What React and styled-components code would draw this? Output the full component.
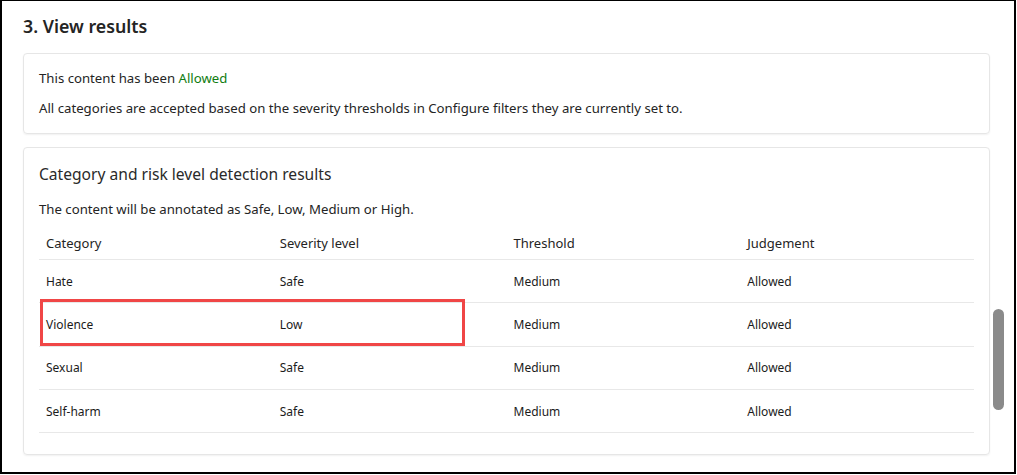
import styled, { createGlobalStyle } from "styled-components";

const GlobalStyle = createGlobalStyle`
  html, body {
    margin: 0;
    padding: 0;
    background: #ffffff;
  }
  body {
    font-family: "Noto Sans", "Open Sans", sans-serif;
    color: #242424;
  }
`;

const Frame = styled.div`
  position: relative;
  box-sizing: border-box;
  width: 1016px;
  height: 474px;
  border: 2px solid #000;
  border-top-width: 1px;
  overflow: hidden;
  padding: 0 24px 0 21px;
`;

const Heading = styled.h2`
  margin: 0;
  padding-top: 12px;
  height: 52px;
  box-sizing: border-box;
  font-size: 17.8px;
  font-weight: 600;
  line-height: 26px;
  color: #242424;
`;

const Card = styled.section`
  box-sizing: border-box;
  border: 1px solid #e6e6e6;
  border-radius: 4px;
  box-shadow: 0 1px 2px rgba(0, 0, 0, 0.06);
  padding: ${({ $padding }) => $padding};
  margin-bottom: 13px;
`;

const Line = styled.p`
  margin: 0;
  font-size: 13.2px;
  line-height: 20px;
  color: #242424;
  & + & {
    margin-top: 10px;
  }
`;

const Allowed = styled.span`
  color: #107c10;
`;

const CardTitle = styled.h3`
  margin: 0;
  font-size: 15.6px;
  font-weight: 400;
  line-height: 22px;
  color: #2a2a2a;
`;

const Subtitle = styled.p`
  margin: 14px 0 0;
  font-size: 13.2px;
  line-height: 20px;
`;

const Table = styled.div`
  margin-top: 8px;
`;

const Row = styled.div`
  display: grid;
  grid-template-columns: repeat(4, 1fr);
  align-items: center;
  box-sizing: border-box;
  height: ${({ $head }) => ($head ? "33px" : "43.3px")};
  border-bottom: 1px solid #e8e8e8;
`;

const Cell = styled.div`
  padding-left: 7px;
  font-size: ${({ $head }) => ($head ? "13px" : "12px")};
  color: ${({ $head }) => ($head ? "#242424" : "#1b1b1b")};
`;

const Highlight = styled.div`
  position: absolute;
  left: 38px;
  top: 298px;
  width: 425px;
  height: 47px;
  box-sizing: border-box;
  border: 3px solid #f04646;
  pointer-events: none;
`;

const ScrollThumb = styled.div`
  position: absolute;
  left: 991px;
  top: 308px;
  width: 11px;
  height: 101px;
  border-radius: 6px;
  background: #8a8a8a;
`;

const rows = [
  ["Hate", "Safe", "Medium", "Allowed"],
  ["Violence", "Low", "Medium", "Allowed"],
  ["Sexual", "Safe", "Medium", "Allowed"],
  ["Self-harm", "Safe", "Medium", "Allowed"],
];

export default function App() {
  return (
    <>
      <GlobalStyle />
      <Frame>
        <Heading>3. View results</Heading>
        <Card $padding="14px 15px 15px">
          <Line>
            This content has been <Allowed>Allowed</Allowed>
          </Line>
          <Line>
            All categories are accepted based on the severity thresholds in
            Configure filters they are currently set to.
          </Line>
        </Card>
        <Card $padding="15px 15px 21px">
          <CardTitle>Category and risk level detection results</CardTitle>
          <Subtitle>The content will be annotated as Safe, Low, Medium or High.</Subtitle>
          <Table>
            <Row $head>
              <Cell $head>Category</Cell>
              <Cell $head>Severity level</Cell>
              <Cell $head>Threshold</Cell>
              <Cell $head>Judgement</Cell>
            </Row>
            {rows.map((r) => (
              <Row key={r[0]}>
                {r.map((c, i) => (
                  <Cell key={i}>{c}</Cell>
                ))}
              </Row>
            ))}
          </Table>
        </Card>
        <Highlight />
        <ScrollThumb />
      </Frame>
    </>
  );
}
